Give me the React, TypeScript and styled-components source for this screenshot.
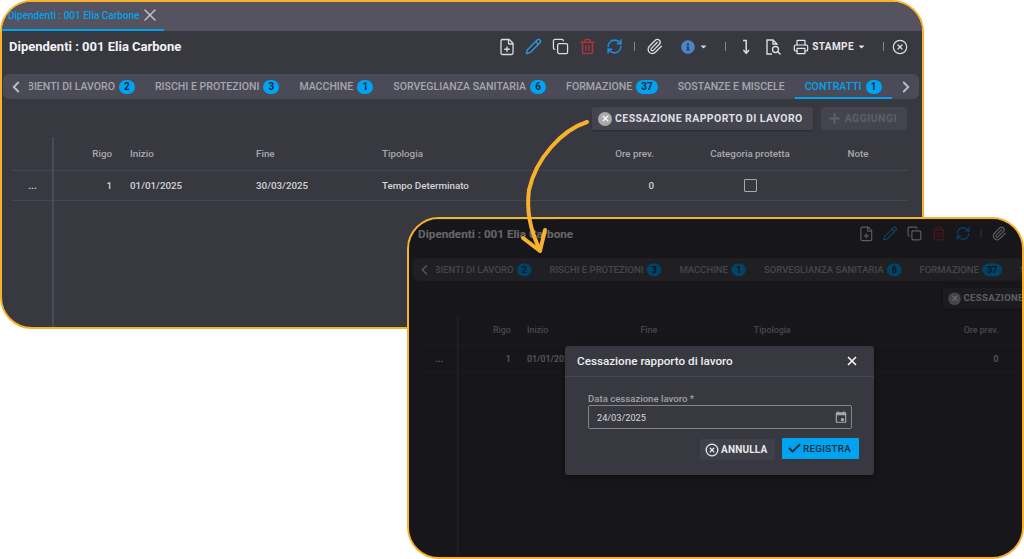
import styled, { createGlobalStyle } from "styled-components";
import { FaCaretDown, FaInfoCircle } from "react-icons/fa";
import {
  Check,
  ChevronLeft,
  ChevronRight,
  CircleX,
  Copy,
  FilePlus,
  Paperclip,
  Pencil,
  Plus,
  Printer,
  RefreshCw,
  Trash2,
  X,
} from "lucide-react";

const amber = "#f8b12c";
const blue = "#00a3f0";

const tabs = [
  { label: "AMBIENTI DI LAVORO", count: 2 },
  { label: "RISCHI E PROTEZIONI", count: 3 },
  { label: "MACCHINE", count: 1 },
  { label: "SORVEGLIANZA SANITARIA", count: 6 },
  { label: "FORMAZIONE", count: 37 },
  { label: "SOSTANZE E MISCELE" },
  { label: "CONTRATTI", count: 1, active: true },
];

const GlobalStyle = createGlobalStyle`
  html, body {
    margin: 0;
    background: #fff;
    font-family: Roboto, "Liberation Sans", sans-serif;
  }
`;

const Screen = () => (
  <Content>
    <DocTabBar>
      <DocTab>
        Dipendenti : 001 Elia Carbone
        <X size={20} color="#c4c4c8" strokeWidth={1.8} />
      </DocTab>
    </DocTabBar>
    <TitleBar>
      <Title>Dipendenti : 001 Elia Carbone</Title>
      <Tools>
        <Tool><FilePlus size={18} strokeWidth={1.7} /></Tool>
        <Tool $color="#2f9ae0"><Pencil size={17} strokeWidth={1.8} /></Tool>
        <Tool><Copy size={17} strokeWidth={1.8} /></Tool>
        <Tool $color="#a8343c"><Trash2 size={17} strokeWidth={2.2} /></Tool>
        <Tool $color="#1b8fdc"><RefreshCw size={17} strokeWidth={2.2} /></Tool>
        <Separator $left={6} $right={6} />
        <Tool><Paperclip size={17} strokeWidth={1.8} /></Tool>
        <Tool $color="#4a86c5" $wide>
          <FaInfoCircle size={14} />
          <FaCaretDown size={9} color="#d8d8dc" />
        </Tool>
        <Separator $left={11} $right={6} />
        <Tool>
          <DownBar viewBox="0 0 10 16">
            <path d="M2 1.5h3.2v12.5M2.4 11l2.8 3.4L8 11" />
          </DownBar>
        </Tool>
        <Tool>
          <FileLens viewBox="0 0 18 18">
            <path d="M8 16H3V2h6l4 4v1M9 2v4h4" />
            <circle cx="11.5" cy="11.5" r="3" />
            <path d="M13.8 13.8l2.7 2.7" />
          </FileLens>
        </Tool>
        <PrintMenu>
          <Printer size={16} strokeWidth={1.8} />
          STAMPE
          <FaCaretDown size={9} />
        </PrintMenu>
        <Separator $left={17} $right={2} />
        <Tool><CircleX size={16} strokeWidth={1.8} /></Tool>
      </Tools>
    </TitleBar>
    <TabStrip>
      <Arrow><ChevronLeft size={18} strokeWidth={2.5} /></Arrow>
      <TabList>
        {tabs.map((tab) => (
          <Tab key={tab.label} $active={tab.active}>
            {tab.label}
            {tab.count !== undefined && <Badge>{tab.count}</Badge>}
          </Tab>
        ))}
      </TabList>
      <Arrow><ChevronRight size={18} strokeWidth={2.5} /></Arrow>
    </TabStrip>
    <Actions>
      <ActionButton>
        <RoundX>
          <X size={9} strokeWidth={4} />
        </RoundX>
        CESSAZIONE RAPPORTO DI LAVORO
      </ActionButton>
      <ActionButton $disabled>
        <Plus size={15} strokeWidth={3.5} />
        AGGIUNGI
      </ActionButton>
    </Actions>
    <Table>
      <HeadRow>
        <Cell />
        <Cell $align="right">Rigo</Cell>
        <Cell>Inizio</Cell>
        <Cell>Fine</Cell>
        <Cell>Tipologia</Cell>
        <Cell $align="right">Ore prev.</Cell>
        <Cell $align="center">Categoria protetta</Cell>
        <Cell $align="center">Note</Cell>
      </HeadRow>
      <BodyRow>
        <RowMenu>...</RowMenu>
        <Cell $align="right">1</Cell>
        <Cell>01/01/2025</Cell>
        <Cell>30/03/2025</Cell>
        <Cell>Tempo Determinato</Cell>
        <Cell $align="right">0</Cell>
        <Cell $align="center"><Checkbox /></Cell>
        <Cell />
      </BodyRow>
    </Table>
  </Content>
);

export default function App() {
  return (
    <Page>
      <GlobalStyle />
      <BackWindow>
        <Screen />
      </BackWindow>
      <FrontWindow>
        <Scaled>
          <Screen />
        </Scaled>
        <Dim />
        <Modal>
          <ModalHeader>
            Cessazione rapporto di lavoro
            <X size={14} strokeWidth={3} color="#f0f0f2" />
          </ModalHeader>
          <ModalBody>
            <FieldLabel>Data cessazione lavoro *</FieldLabel>
            <Field>
              24/03/2025
              <CalendarIcon viewBox="0 0 24 24">
                <path d="M19 4h-1V2h-2v2H8V2H6v2H5a2 2 0 0 0-2 2v14a2 2 0 0 0 2 2h14a2 2 0 0 0 2-2V6a2 2 0 0 0-2-2zm0 16H5V9h14v11zm-2-6h-5v5h5v-5z" />
              </CalendarIcon>
            </Field>
            <ModalActions>
              <CancelButton>
                <CircleX size={14} strokeWidth={2.2} />
                ANNULLA
              </CancelButton>
              <SaveButton>
                <Check size={15} strokeWidth={3} />
                REGISTRA
              </SaveButton>
            </ModalActions>
          </ModalBody>
        </Modal>
      </FrontWindow>
      <CurvedArrow viewBox="0 0 1024 559">
        <path d="M587 122C562 130 536 158 529 190C526 212 531 232 540 250" />
        <path d="M523 238L540 251L545 230" />
      </CurvedArrow>
    </Page>
  );
}

const Page = styled.div`
  position: relative;
  width: 1024px;
  height: 559px;
  overflow: hidden;
`;

const BackWindow = styled.section`
  position: absolute;
  left: 0;
  top: 0;
  box-sizing: border-box;
  width: 924px;
  height: 329px;
  border: 2px solid ${amber};
  border-radius: 32px;
  overflow: hidden;
  background: #383841;
`;

const FrontWindow = styled.section`
  position: absolute;
  left: 407px;
  top: 217px;
  box-sizing: border-box;
  width: 617px;
  height: 342px;
  border: 2px solid ${amber};
  border-radius: 32px;
  overflow: hidden;
  background: #383841;
`;

const Scaled = styled.div`
  width: 920px;
  height: 408px;
  transform: translate(2.8px, -25.6px) scale(0.9);
  transform-origin: 0 0;
`;

const Dim = styled.div`
  position: absolute;
  inset: 0;
  background: rgba(0, 0, 0, 0.58);
`;

const Content = styled.div`
  display: flex;
  flex-direction: column;
  height: 100%;
  color: #d8d8dc;
`;

const DocTabBar = styled.div`
  display: flex;
  flex: none;
  height: 29px;
  background: #54535f;
`;

const DocTab = styled.div`
  display: flex;
  align-items: center;
  box-sizing: border-box;
  width: 162px;
  padding: 0 0 1px 6px;
  border-bottom: 2px solid ${blue};
  color: ${blue};
  font-size: 10px;
  font-weight: 500;
  white-space: nowrap;
`;

const TitleBar = styled.header`
  display: flex;
  flex: none;
  align-items: center;
  justify-content: space-between;
  height: 31px;
  padding: 0 9px 0 7px;
`;

const Title = styled.h1`
  margin: 0;
  color: #f2f2f4;
  font-size: 13px;
  font-weight: 700;
`;

const Tools = styled.div`
  display: flex;
  align-items: center;
  color: #dcdce0;
`;

const Tool = styled.span<{ $color?: string; $wide?: boolean }>`
  display: flex;
  align-items: center;
  justify-content: center;
  gap: 4px;
  width: ${(p) => (p.$wide ? 40 : 27)}px;
  margin-left: ${(p) => (p.$wide ? 6 : 0)}px;
  color: ${(p) => p.$color || "inherit"};
`;

const Separator = styled.i<{ $left: number; $right: number }>`
  width: 1px;
  height: 9px;
  margin: 0 ${(p) => p.$right}px 0 ${(p) => p.$left}px;
  background: #85858d;
`;

const DownBar = styled.svg`
  width: 10px;
  height: 16px;
  fill: none;
  stroke: currentColor;
  stroke-width: 1.5;
`;

const FileLens = styled.svg`
  width: 18px;
  height: 18px;
  fill: none;
  stroke: currentColor;
  stroke-width: 1.4;
`;

const PrintMenu = styled.span`
  display: flex;
  align-items: center;
  gap: 3px;
  margin-left: 7px;
  font-size: 10px;
  font-weight: 700;
  letter-spacing: 0.4px;
  color: #e8e8ec;
`;

const TabStrip = styled.nav`
  display: flex;
  flex: none;
  align-items: stretch;
  height: 25px;
  margin: 12px 3px 0 1px;
  border-radius: 6px;
  background: #4b4b57;
`;

const Arrow = styled.span`
  display: flex;
  flex: none;
  align-items: center;
  justify-content: center;
  width: 26px;
  color: #bcbcc2;
`;

const TabList = styled.div`
  display: flex;
  flex: 1;
  min-width: 0;
  overflow: hidden;

  & > :first-child {
    margin-left: -28px;
  }
`;

const Tab = styled.span<{ $active?: boolean }>`
  display: flex;
  flex: none;
  align-items: center;
  gap: 4px;
  box-sizing: border-box;
  padding: 0 10px;
  border-bottom: 2px solid ${(p) => (p.$active ? blue : "transparent")};
  border-top: 2px solid transparent;
  color: ${(p) => (p.$active ? blue : "#a6a6ac")};
  font-size: 10.56px;
  font-weight: 500;
  white-space: nowrap;
`;

const Badge = styled.b`
  min-width: 16px;
  height: 14px;
  padding: 0 ${(p) => (String(p.children).length > 1 ? 5 : 3)}px;
  box-sizing: border-box;
  border-radius: 8px;
  background: ${blue};
  color: #1c2c3a;
  font-size: 10px;
  line-height: 14px;
  text-align: center;
`;

const Actions = styled.div`
  display: flex;
  flex: none;
  justify-content: flex-end;
  gap: 8px;
  height: 23px;
  margin-top: 8px;
  padding-right: 15px;
`;

const ActionButton = styled.button<{ $disabled?: boolean }>`
  display: flex;
  align-items: center;
  gap: 3px;
  padding: 0 10px 0 6px;
  border: 0;
  border-radius: 2px;
  background: #44444e;
  box-shadow: ${(p) => (p.$disabled ? "none" : "0 1px 2px rgba(0, 0, 0, 0.25)")};
  color: ${(p) => (p.$disabled ? "#5e5e68" : "#dedee2")};
  font-family: inherit;
  font-size: 10.5px;
  font-weight: 700;
  letter-spacing: 0.42px;
`;

const RoundX = styled.span`
  display: flex;
  align-items: center;
  justify-content: center;
  width: 14px;
  height: 14px;
  border-radius: 50%;
  background: #a8a8ae;
  color: #f2f2f4;
`;

const Table = styled.div`
  position: relative;
  flex: 1;
  margin: 7px 14px 0 10px;

  &::before {
    content: "";
    position: absolute;
    left: 40px;
    top: 0;
    bottom: 0;
    width: 1.5px;
    background: #4b4b57;
  }
`;

const HeadRow = styled.div`
  display: grid;
  grid-template-columns: 41px 77px 126px 126px 160px 130px 156px 60px 1fr;
  align-items: center;
  height: 33px;
  border-bottom: 1px solid #45454f;
  color: #a8a8ae;
  font-size: 9.8px;
  font-weight: 500;
`;

const BodyRow = styled(HeadRow)`
  height: 29px;
  color: #d4d4d8;
`;

const Cell = styled.div<{ $align?: "right" | "center" }>`
  display: flex;
  justify-content: ${(p) =>
    p.$align === "right" ? "flex-end" : p.$align === "center" ? "center" : "flex-start"};
  padding-right: ${(p) => (p.$align === "right" ? 18 : 0)}px;
`;

const RowMenu = styled(Cell)`
  justify-content: center;
  padding-bottom: 1px;
  font-weight: 700;
`;

const Checkbox = styled.span`
  box-sizing: border-box;
  width: 13px;
  height: 13px;
  border: 1.5px solid #a8a8ae;
  border-radius: 1px;
`;

const Modal = styled.div`
  position: absolute;
  left: 156px;
  top: 127px;
  width: 309px;
  height: 129px;
  border-radius: 3px;
  background: #383841;
  box-shadow: 0 2px 8px rgba(0, 0, 0, 0.4);
`;

const ModalHeader = styled.header`
  display: flex;
  align-items: center;
  justify-content: space-between;
  box-sizing: border-box;
  height: 31px;
  padding: 0 15px 0 12px;
  border-bottom: 1px solid #45454f;
  color: #eeeef0;
  font-size: 11.7px;
  font-weight: 500;
`;

const ModalBody = styled.div`
  display: flex;
  flex-direction: column;
  padding: 16px 15px 0 23px;
`;

const FieldLabel = styled.label`
  color: #a0a0a6;
  font-size: 9.6px;
  font-weight: 500;
  line-height: 12px;
`;

const Field = styled.div`
  display: flex;
  align-items: center;
  justify-content: space-between;
  box-sizing: border-box;
  width: 264px;
  height: 24px;
  padding: 0 3px 0 8px;
  border: 1px solid #84848a;
  border-radius: 2px;
  color: #d8d8dc;
  font-size: 9.2px;
`;

const CalendarIcon = styled.svg`
  width: 14px;
  height: 14px;
  fill: #a8a8ae;
`;

const ModalActions = styled.div`
  display: flex;
  justify-content: flex-end;
  align-items: flex-start;
  gap: 7px;
  margin-top: 9px;
`;

const CancelButton = styled.button`
  display: flex;
  align-items: center;
  gap: 2px;
  width: 75px;
  height: 21px;
  margin-top: 1px;
  padding: 0 0 0 5px;
  border: 0;
  border-radius: 2px;
  background: #40404a;
  color: #e8e8ec;
  font-family: inherit;
  font-size: 10px;
  font-weight: 700;
  letter-spacing: 0.2px;
`;

const SaveButton = styled.button`
  display: flex;
  align-items: center;
  gap: 1px;
  width: 77px;
  height: 21px;
  padding: 0 0 0 5px;
  border: 0;
  border-radius: 1px;
  background: ${blue};
  color: #1c2c3a;
  font-family: inherit;
  font-size: 9.8px;
  font-weight: 500;
  letter-spacing: 0.3px;
`;

const CurvedArrow = styled.svg`
  position: absolute;
  left: 0;
  top: 0;
  width: 1024px;
  height: 559px;
  fill: none;
  stroke: ${amber};
  stroke-width: 4;
  stroke-linecap: round;
  stroke-linejoin: round;
  pointer-events: none;
`;
